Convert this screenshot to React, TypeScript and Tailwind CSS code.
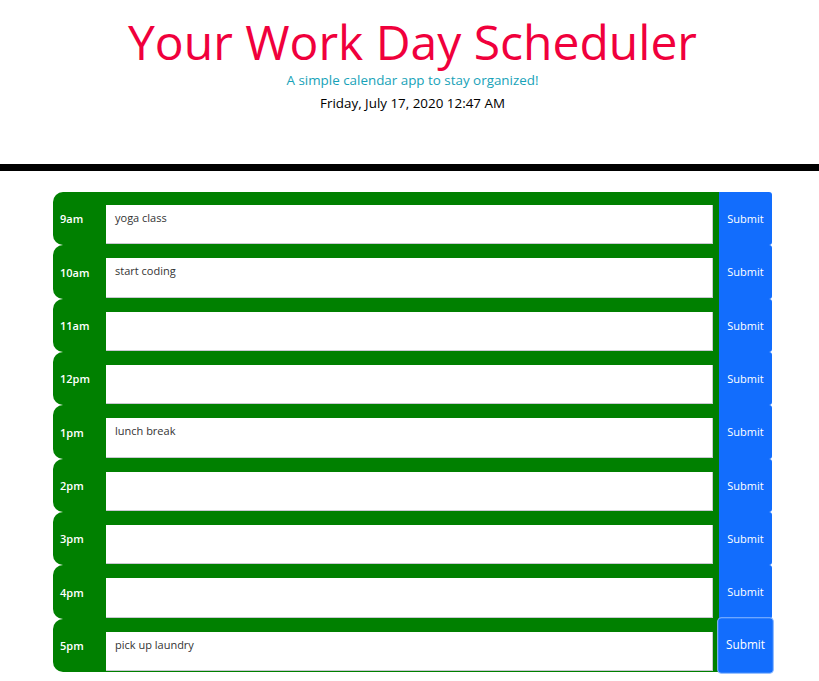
import React from "react";

const rows = [
  { h: "9am", t: "yoga class" },
  { h: "10am", t: "start coding" },
  { h: "11am", t: "" },
  { h: "12pm", t: "" },
  { h: "1pm", t: "lunch break" },
  { h: "2pm", t: "" },
  { h: "3pm", t: "" },
  { h: "4pm", t: "" },
  { h: "5pm", t: "pick up laundry" },
];

export default function App() {
  return (
    <div className="min-h-[681px] bg-white" style={{ fontFamily: '"Open Sans", "Noto Sans", sans-serif' }}>
      <header className="flex flex-col items-center pt-[16px] pl-[6px]">
        <h1 className="text-[48px] leading-[52px] text-[#f0003c] font-normal">Your Work Day Scheduler</h1>
        <p className="text-[13.4px] leading-[20px] text-[#17a2b8] mt-[2px]">A simple calendar app to stay organized!</p>
        <p className="text-[13.4px] leading-[20px] text-black mt-[3px]">Friday, July 17, 2020 12:47 AM</p>
      </header>
      <div className="h-[7px] bg-black mt-[51px]" />
      <div className="pl-[53px] pt-[21px]">
        <div className="w-[719px] flex flex-col">
          {rows.map((r, i) => {
            const last = i === rows.length - 1;
            return (
              <div key={r.h} className="flex h-[53.33px]">
                <div className="w-[52px] bg-[#008000] rounded-l-[10px] text-white text-[11px] font-semibold flex items-center pl-[7px] pt-[2px]">
                  {r.h}
                </div>
                <div className="flex-1 bg-[#008000] pt-[13px] pb-[1px] pl-[1px] pr-[6px] flex">
                  <div className="flex-1 bg-white border-b border-r border-[#c9c9d1] text-[11px] text-[#333] pl-[9px] pt-[5px] leading-[16px]">
                    {r.t}
                  </div>
                </div>
                <button
                  className={
                    last
                      ? "w-[53px] bg-[#126dfd] text-white text-[11px] rounded-[4px] border border-[#8dbaff] scale-[1.07] relative"
                      : "w-[53px] bg-[#126dfd] text-white text-[11px] rounded-r-[3px] pt-[1px]"
                  }
                >
                  Submit
                </button>
              </div>
            );
          })}
        </div>
      </div>
    </div>
  );
}
